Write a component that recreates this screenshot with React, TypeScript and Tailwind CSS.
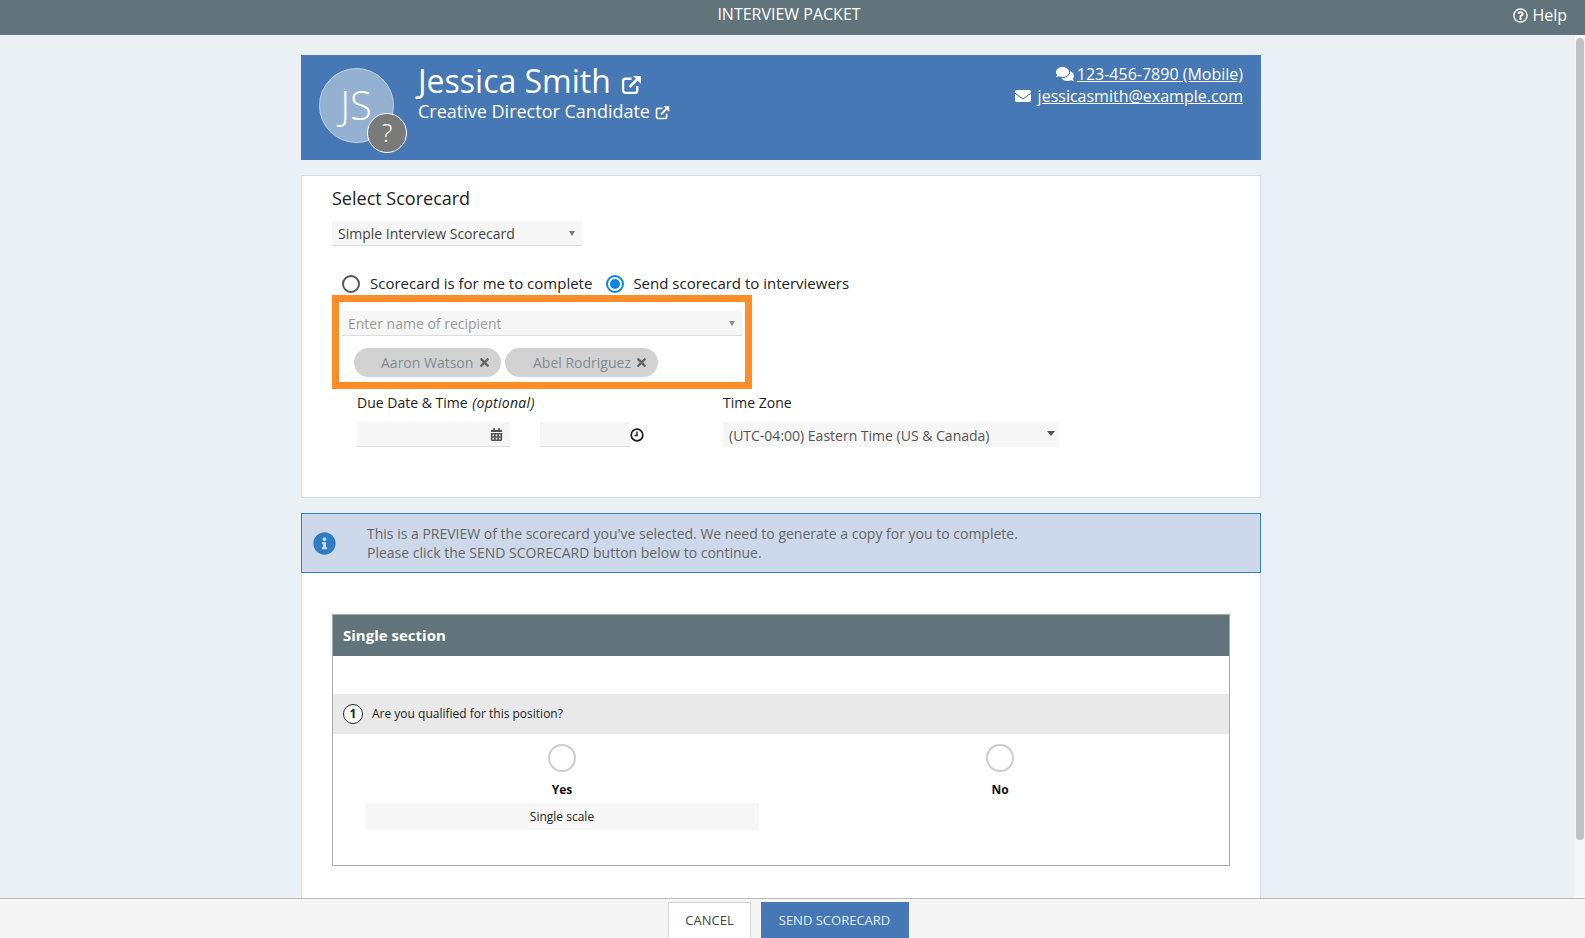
import { FaCalendarAlt, FaComments, FaEnvelope, FaInfoCircle, FaRegQuestionCircle, FaTimes } from "react-icons/fa";

function LinkOut({ size }: { size: number }) {
  return (
    <svg width={size} height={size} viewBox="0 0 20 20" fill="none" stroke="currentColor" className="shrink-0">
      <path d="M15.5 11.5v4.2a2.3 2.3 0 0 1-2.3 2.3H4.3A2.3 2.3 0 0 1 2 15.700V6.800a2.300 2.300 0 0 1 2.300-2.300H10" strokeWidth="2.200" />
      <path d="M8 12.500 16.500 4" strokeWidth="2.600" />
      <path d="M11.500 1.800H19v7.500z" fill="currentColor" stroke="none" />
    </svg>
  );
}

function ClockIcon() {
  return (
    <svg width="14" height="14" viewBox="0 0 14 14" fill="none" stroke="#1c1c1c" className="shrink-0">
      <circle cx="7" cy="7" r="5.800" strokeWidth="1.700" />
      <path d="M7 3.500V7.500H4.500" strokeWidth="1.400" />
    </svg>
  );
}

function Caret({ className }: { className: string }) {
  return <span className={"h-0 w-0 border-x-transparent " + className} />;
}

function Chip({ name, className }: { name: string; className: string }) {
  return (
    <div className={"flex h-[29px] items-center justify-between rounded-full bg-[#d2d2d2] pr-[10px] text-[14px] text-[#7f8c94] " + className}>
      <span>{name}</span>
      <FaTimes className="text-[13px] text-[#666]" />
    </div>
  );
}

export default function App() {
  return (
    <div className="relative flex h-[938px] flex-col overflow-hidden bg-[#ebf0f4] font-['Open_Sans',sans-serif]">
      {/* Top bar */}
      <div className="relative flex h-[35px] shrink-0 items-center justify-center bg-[#62747b] pb-[7px] pr-[7px] text-[16px] text-white">
        INTERVIEW PACKET
        <div className="absolute right-[18px] top-[6px] flex items-center gap-[4px] text-[16px] leading-[19px]">
          <FaRegQuestionCircle className="text-[15px]" />
          Help
        </div>
      </div>

      {/* Scrollbar */}
      <div className="absolute right-0 top-[35px] h-[863px] w-[10px] bg-[#f4f6f8] pt-[3px]">
        <div className="ml-[1px] h-[802px] w-[8px] rounded-full bg-[#c1c1c1]" />
      </div>

      <main className="ml-[301px] w-[960px] flex-1 pt-[20px] text-[#333]">
        {/* Candidate header */}
        <div className="flex h-[105px] justify-between bg-[#4678b5] pl-[18px] pr-[18px] text-white">
          <div className="flex">
            <div className="relative mt-[13px] flex h-[75px] w-[75px] items-center justify-center rounded-full border border-[#c4d2e2] bg-[#95b1d2] text-[40px] font-light">
              <span className="-mt-[1px] -ml-[1px]">JS</span>
              <div className="absolute left-[47px] top-[44px] flex h-[40px] w-[40px] items-center justify-center rounded-full border border-white bg-[#7a7a7a] text-[25px] font-light">?</div>
            </div>
            <div className="ml-[24px]">
              <div className="mt-[4px] flex items-center gap-[10px] text-[32px] leading-[44px]">
                Jessica Smith
                <span className="mt-[7px]"><LinkOut size={21} /></span>
              </div>
              <div className="-mt-[4px] flex items-center gap-[5px] text-[18px] leading-[24px]">
                Creative Director Candidate
                <span className="mt-[2px]"><LinkOut size={15} /></span>
              </div>
            </div>
          </div>
          <div className="pt-[8px] text-right text-[16px] leading-[22px]">
            <div className="flex items-center justify-end gap-[3px]">
              <FaComments className="text-[18px]" />
              <span className="underline">123-456-7890 (Mobile)</span>
            </div>
            <div className="flex items-center justify-end gap-[7px]">
              <FaEnvelope className="text-[16px]" />
              <span className="underline">jessicasmith@example.com</span>
            </div>
          </div>
        </div>

        {/* Select scorecard */}
        <section className="mt-[15px] h-[323px] border border-[#d8dcdf] bg-white pl-[30px] pt-[10px]">
          <h2 className="text-[18px] leading-[25px] text-[#222]">Select Scorecard</h2>
          <div className="mt-[10px] flex h-[25px] w-[250px] items-center justify-between border-b border-[#ddd] bg-[#f6f6f6] pl-[6px] pr-[7px] text-[14px] text-[#444]">
            Simple Interview Scorecard
            <Caret className="border-x-[3px] border-t-[5px] border-t-[#777]" />
          </div>
          <div className="mt-[29px] flex h-[18px] items-center pl-[10px] text-[15px] text-[#222]">
            <span className="h-[18px] w-[18px] rounded-full border-2 border-[#555]" />
            <span className="-mt-[2px] ml-[10px]">Scorecard is for me to complete</span>
            <span className="ml-[14px] flex h-[18px] w-[18px] items-center justify-center rounded-full border-2 border-[#0a84e0]">
              <span className="h-[10px] w-[10px] rounded-full bg-[#0a84e0]" />
            </span>
            <span className="-mt-[2px] ml-[9px]">Send scorecard to interviewers</span>
          </div>

          {/* Recipients, highlighted */}
          <div className="mt-[2px] h-[94px] w-[420px] border-[7px] border-[#ff8c26] px-[3px] pt-[9px]">
            <div className="flex h-[25px] items-center justify-between border-b border-[#ddd] bg-[#f6f6f6] pl-[6px] pr-[7px] text-[14px] text-[#999]">
              Enter name of recipient
              <Caret className="border-x-[3px] border-t-[5px] border-t-[#888]" />
            </div>
            <div className="mt-[12px] flex gap-[4px] pl-[12px]">
              <Chip name="Aaron Watson" className="w-[147px] pl-[27px]" />
              <Chip name="Abel Rodriguez" className="w-[153px] pl-[28px]" />
            </div>
          </div>

          {/* Due date and time zone */}
          <div className="ml-[25px] mt-[4px] flex">
            <div className="w-[366px]">
              <div className="text-[14px] leading-[20px] text-[#222]">
                Due Date &amp; Time <i className="ml-[1px] tracking-[0.3px]">(optional)</i>
              </div>
              <div className="mt-[9px] flex items-center">
                <div className="flex h-[25px] w-[153px] items-center justify-end border-b border-[#ddd] bg-[#f6f6f6] pr-[7px]">
                  <FaCalendarAlt className="text-[13px] text-[#555]" />
                </div>
                <div className="ml-[30px] h-[25px] w-[90px] border-b border-[#ddd] bg-[#f6f6f6]" />
                <ClockIcon />
              </div>
            </div>
            <div>
              <div className="text-[14px] leading-[20px] text-[#222]">Time Zone</div>
              <div className="mt-[9px] flex h-[25px] w-[336px] items-center justify-between bg-[#f6f6f6] pl-[6px] pr-[4px] pt-[2px] text-[14px] text-[#555]">
                (UTC-04:00) Eastern Time (US &amp; Canada)
                <Caret className="-mt-[5px] border-x-[4px] border-t-[5px] border-t-[#555]" />
              </div>
            </div>
          </div>
        </section>

        {/* Preview notice */}
        <div className="mt-[15px] flex h-[60px] items-center border border-[#2f7fc4] bg-[#cdd9ea]">
          <FaInfoCircle className="ml-[11px] text-[23px] text-[#2f7dc0]" />
          <div className="ml-[31px] text-[14px] leading-[19px] text-[#666]">
            This is a PREVIEW of the scorecard you've selected. We need to generate a copy for you to complete.
            <br />
            Please click the SEND SCORECARD button below to continue.
          </div>
        </div>

        {/* Scorecard preview */}
        <div className="h-[325px] border-x border-[#d8dcdf] bg-white px-[30px] pt-[41px]">
          <div className="h-[252px] border border-[#aaa]">
            <div className="flex h-[41px] items-center bg-[#62747b] pb-[1px] pl-[10px] text-[15px] font-bold text-white">Single section</div>
            <div className="mt-[38px] flex h-[40px] items-center bg-[#e9e9e9] pl-[10px] text-[12px] text-[#222]">
              <span className="flex h-[20px] w-[20px] items-center justify-center rounded-full border border-[#222] bg-white font-bold">1</span>
              <span className="ml-[9px]">Are you qualified for this position?</span>
            </div>
            <div className="mt-[10px] flex pl-[32px]">
              <div className="flex w-[394px] flex-col items-center">
                <span className="h-[28px] w-[28px] rounded-full border-2 border-[#ccc]" />
                <span className="mt-[9px] text-[12px] font-bold leading-[18px] text-[#111]">Yes</span>
                <div className="mt-[4px] flex h-[27px] w-full items-center justify-center bg-[#f7f7f7] text-[12px] text-[#222]">Single scale</div>
              </div>
              <div className="ml-[44px] flex w-[394px] flex-col items-center">
                <span className="h-[28px] w-[28px] rounded-full border-2 border-[#ccc]" />
                <span className="mt-[9px] text-[12px] font-bold leading-[18px] text-[#111]">No</span>
              </div>
            </div>
          </div>
        </div>
      </main>

      {/* Footer actions */}
      <footer className="relative flex h-[40px] shrink-0 justify-center gap-[10px] border-t border-[#bbb] bg-[#f5f5f5] pr-[9px] pt-[3px] text-[13px]">
        <div className="flex h-[40px] w-[83px] items-center justify-center border border-[#d5d5d5] bg-white pb-[2px] pl-[1px] text-[#444]">CANCEL</div>
        <div className="flex h-[40px] w-[148px] items-center justify-center bg-[#4678b5] pb-[2px] text-[#e6eef7]">SEND SCORECARD</div>
      </footer>
    </div>
  );
}
